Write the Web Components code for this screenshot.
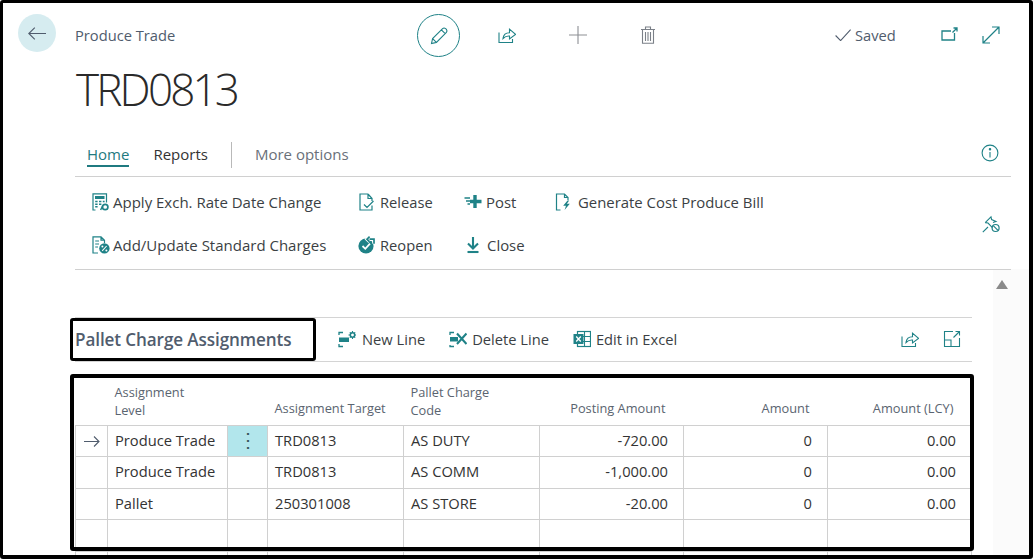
<!DOCTYPE html>
<html lang="en"><head><meta charset="utf-8"><title>Produce Trade</title>
<style>
html,body{margin:0;padding:0;background:#fff}
body{font-family:"Open Sans","Liberation Sans",sans-serif;width:1033px;height:559px;overflow:hidden}
</style></head><body>
<script>
const T='#1f8287';
const svg=(inner,w=18,h=18,vb='0 0 18 18')=>`<svg width="${w}" height="${h}" viewBox="${vb}" fill="none" stroke="currentColor" stroke-width="1.1" style="display:block">${inner}</svg>`;
const ICONS={
 back:svg('<path d="M.8 6.5H18M6.8.6L.8 6.5L6.8 12.4"/>',19,13,'0 0 19 13'),
 pencil:svg('<path d="M2.5 17.5L3.6 12.6L13.6 2.6Q15 1.4 16.6 2.6L17.4 3.4Q18.6 5 17.4 6.4L7.4 16.4ZM3.6 12.6L7.4 16.4M12.4 3.8L16.2 7.6"/>',20,20,'0 0 20 20'),
 share:svg('<path d="M1 6.5V16.5H14.5V13M5 12.5C5.5 8.5 8 6.8 11.5 6.8V3.2L17.5 8.4L11.5 13V10C8.8 9.8 6.8 10.6 5 12.5Z"/>'),
 plus:svg('<path d="M9 0V18M0 9H18"/>',18,18),
 trash:svg('<path d="M1 3.5H15M5.5 3.5V1H10.5V3.5M2.5 3.5V17.2H13.5V3.5M5.5 6V15M8 6V15M10.5 6V15"/>',16,18,'0 0 16 18'),
 check:svg('<path d="M.6 6.5L5.6 11.6L15.6.6"/>',16,12,'0 0 16 12'),
 popout:svg('<path d="M13.5 6V13H1V4H10M11.5 5.5L16 1M12.5 1H16V4.5" stroke-width="1.3"/>',17,14,'0 0 17 14'),
 expand:svg('<path d="M1 17L17 1M10 1H17V8M1 10V17H8" stroke-width="1.2"/>'),
 info:svg('<circle cx="9" cy="9" r="7.9"/><path d="M9 8V13.4"/><circle cx="9" cy="5.3" r=".7" fill="currentColor"/>'),
 pin:svg('<path d="M.8 17.2L6 12M3.2 7.6L9 1.8L9.6 4.6L14 6.4L11 7.6M3.2 7.6L6 8L10.4 12.6"/><circle cx="13.6" cy="13" r="3.5" stroke-width="1.2"/><path d="M11.2 10.6L16 15.4" stroke-width="1.2"/>'),
 calc:svg('<path d="M3.5 17H1V.8H14.5V9.5" stroke-width="1.2"/><rect x="3" y="3" width="9.5" height="3" fill="currentColor" stroke="none"/><path d="M3.2 8.6H5.6M7 8.6H9.4M10.8 8.6H12.6M3.2 11.2H5.6M7 11.2H9.4M3.2 13.8H5.6" stroke-width="1.5"/><circle cx="13.2" cy="14" r="2.7" stroke-width="1.7"/><path d="M8.6 17L10.6 13" stroke-width="1.5"/>'),
 doccheck:svg('<path d="M10 1H2V17H14V12.5M10 1V5.5H14V8M10 1L14 5.5M6 11.5L9 14.5L15.5 8" stroke-width="1.2"/>'),
 docpct:svg('<path d="M6 17H1V.8H9L12.5 4.2V7M9 .8V4.2H12.5M3.2 5H7M3.2 8H7M3.2 11H6" stroke-width="1.2"/><circle cx="12.4" cy="12.4" r="5.2" fill="currentColor" stroke="none"/><path d="M10.2 14.8L14.6 10" stroke="#fff"/><circle cx="10.4" cy="10.4" r="1" fill="#fff" stroke="none"/><circle cx="14.4" cy="14.4" r="1" fill="#fff" stroke="none"/>'),
 reopen:svg('<circle cx="8" cy="10" r="7.6" fill="currentColor" stroke="none"/><path d="M4.5 10L7.3 12.8L12 7.6" stroke="#fff" stroke-width="1.8"/><path d="M11.5 3.2H16V7.8M11.6 .6L9 3.2L11.6 5.8" stroke="#fff" stroke-width="3.4"/><path d="M11.5 3.2H16V7.8M11.6 .6L9 3.2L11.6 5.8" stroke-width="1.7"/>'),
 post:svg('<path d="M.5 5H6M2 8H6M3.5 11H6" stroke-width="1.4"/><path d="M11 2V15M6 8.5H17.5" stroke-width="3.4"/>'),
 close:svg('<path d="M9 1V12M4 7.5L9 12.5L14 7.5" stroke-width="2.1"/><path d="M3.5 16H14.5" stroke-width="2.1"/>'),
 gen:svg('<path d="M5.5 17H1.5V1H9.5L13 4.5V7M9.5 1V4.5H13" stroke-width="1.2"/><path d="M12.5 7.5L8.2 12.8H11L9.6 17L14.8 10.8H11.8L14.2 7.5Z" fill="currentColor" stroke="none"/>'),
 newline:svg('<path d="M1 5V2.5H5M1 14V16.5H5" stroke-width="1.3"/><rect x="1" y="7.5" width="10" height="4.5" fill="currentColor" stroke="none"/><circle cx="14.5" cy="5" r="2.2" stroke-width="1.5"/><path d="M14.5 1V3M14.5 7V9M10.5 5H12.5M16.5 5H18M11.8 2.3L13 3.5M17.2 2.3L16 3.5M11.8 7.7L13 6.5M17.2 7.7L16 6.5"/>'),
 delline:svg('<path d="M1 5V2.5H5M1 15V16.5H5" stroke-width="1.3"/><rect x="1" y="7" width="8" height="4.5" fill="currentColor" stroke="none"/><path d="M8 3.5L17.5 14M17.5 3.5L8 14" stroke-width="2.1"/>'),
 excel:svg('<rect x="4.5" y="1.5" width="13" height="15" stroke-width="1.2"/><path d="M4.5 6.5H17.5M4.5 11.5H17.5M11.5 1.5V16.5"/><rect x=".5" y="4" width="10" height="10" fill="currentColor" stroke="none"/><path d="M3.2 6.5L7.8 11.5M7.8 6.5L3.2 11.5" stroke="#fff" stroke-width="1.3"/>'),
 frame:svg('<path d="M10 1.5H1.5V16.5H16.5V8M1.5 10H8V16.5M10.5 7.5L16.5 1.5M12.5 1.5H16.5V5.5"/>'),
 arrow:svg('<path d="M0 6.5H15M10 1.5L15 6.5L10 11.5"/>',16,13,'0 0 16 13'),
};
class UiIcon extends HTMLElement{
 connectedCallback(){
  if(this.shadowRoot)return;
  const s=this.attachShadow({mode:'open'});
  s.innerHTML=`<style>:host{display:inline-flex;align-items:center;justify-content:center;color:var(--icon,${T});flex:none}</style>${ICONS[this.getAttribute('name')]||''}`;
 }
}
customElements.define('ui-icon',UiIcon);

class AppFrame extends HTMLElement{
 constructor(){super();this.attachShadow({mode:'open'}).innerHTML=`<style>
 :host{display:block;box-sizing:border-box;width:1033px;height:559px;border:solid #000;border-width:3px 4px 4px 3px;background:#fff;overflow:hidden;position:relative;border-radius:3px}
 .track{position:absolute;right:0;top:266px;bottom:0;width:36px;background:#fbfbfb}
 .thumb{position:absolute;left:3px;top:11px;width:0;height:0;border:solid transparent;border-width:0 6px 9px;border-bottom-color:#8a8a8a}
 .body{position:relative}
 </style><div class="track"><div class="thumb"></div></div><div class="body"><slot></slot></div>`}
}
customElements.define('app-frame',AppFrame);

class PageHeader extends HTMLElement{
 constructor(){super();this.attachShadow({mode:'open'}).innerHTML=`<style>
 :host{display:block;padding:11px 0 0 15px;height:124px;box-sizing:border-box}
 .top{display:flex;align-items:flex-start}
 .back{width:38px;height:38px;border-radius:50%;background:#d6ecf0;display:flex;align-items:center;justify-content:center;--icon:#505c6d;flex:none}
 .cap{margin:11px 0 0 19px;width:342px;font-size:14.7px;line-height:20px;color:#505c6d}
 .edit{width:41px;height:41px;border:1.2px solid ${T};border-radius:50%;display:flex;align-items:center;justify-content:center;flex:none}
 .ic{display:flex;align-items:center;margin-top:12px}
 .saved{display:flex;align-items:center;gap:4px;margin:11px 0 0 0;font-size:14.7px;line-height:20px;color:#505c6d;--icon:#505c6d;width:98px}
 h1{margin:2px 0 0 58px;font-weight:300;font-size:44px;line-height:60px;letter-spacing:-2.8px;color:#2a2a2a}
 </style>
 <div class="top">
  <div class="back"><ui-icon name="back"></ui-icon></div>
  <div class="cap"><slot name="caption"></slot></div>
  <div class="edit"><ui-icon name="pencil"></ui-icon></div>
  <div class="ic" style="margin-left:38px"><ui-icon name="share"></ui-icon></div>
  <div class="ic" style="margin-left:53px;--icon:#8d8f94"><ui-icon name="plus"></ui-icon></div>
  <div class="ic" style="margin-left:53px;--icon:#7b8088"><ui-icon name="trash"></ui-icon></div>
  <div style="width:179px"></div>
  <div class="saved"><ui-icon name="check"></ui-icon><span>Saved</span></div>
  <div class="ic" style="margin-left:8px;margin-top:13px"><ui-icon name="popout"></ui-icon></div>
  <div class="ic" style="margin-left:24px"><ui-icon name="expand"></ui-icon></div>
 </div>
 <h1><slot name="title"></slot></h1>`}
}
customElements.define('page-header',PageHeader);

class ActionTabs extends HTMLElement{
 constructor(){super();this.attachShadow({mode:'open'}).innerHTML=`<style>
 :host{display:flex;align-items:center;height:50px;margin-left:72px;width:936px;box-sizing:border-box;border-bottom:1px solid #d0d0d0;font-size:15px;padding:7px 0 0 12px;position:relative}
 .on{color:#1f7a80;border-bottom:2px solid #1f7a80;line-height:19px;padding-bottom:1.5px;margin-top:1.5px}
 .r{margin:-2px 0 0 24px;color:#333}
 .sep{width:1px;height:26px;background:#b9b9b9;margin:0 23px 0 23px}
 .m{color:#6a7079;margin-top:-2px}
 .i{margin-left:auto;margin-right:12px}
 </style><span class="on">Home</span><span class="r">Reports</span><span class="sep"></span><span class="m">More options</span><span class="i"><ui-icon name="info"></ui-icon></span>`}
}
customElements.define('action-tabs',ActionTabs);

class ActionItem extends HTMLElement{
 constructor(){super();this.attachShadow({mode:'open'}).innerHTML=`<style>
 :host{display:inline-flex;align-items:center;gap:var(--g,5px);font-size:var(--fs,14.9px);color:#3b3f44;white-space:nowrap}
 </style><slot name="i"></slot><slot></slot>`}
 connectedCallback(){ if(this.querySelector('ui-icon'))return;
  const i=document.createElement('ui-icon');i.setAttribute('name',this.getAttribute('icon'));i.slot='i';this.prepend(i);}
}
customElements.define('action-item',ActionItem);

class ActionBar extends HTMLElement{
 constructor(){super();this.attachShadow({mode:'open'}).innerHTML=`<style>
 :host{display:grid;grid-template-columns:266px 106px 91px 1fr;grid-auto-rows:43px;align-items:center;margin-left:72px;width:936px;box-sizing:border-box;padding:3px 0 0 17px;height:93px;border-bottom:1px solid #d0d0d0;position:relative}
 .pin{position:absolute;right:11px;top:38px}
 </style><slot></slot><span class="pin"><ui-icon name="pin"></ui-icon></span>`}
}
customElements.define('action-bar',ActionBar);

class CalloutBox extends HTMLElement{
 constructor(){super();this.attachShadow({mode:'open'}).innerHTML=`<style>
 :host{display:block;position:absolute;box-sizing:border-box;border:3px solid #000;border-radius:3px;pointer-events:none;z-index:2}
 </style>`}
}
customElements.define('callout-box',CalloutBox);

class PartBar extends HTMLElement{
 constructor(){super();this.attachShadow({mode:'open'}).innerHTML=`<style>
 :host{display:flex;align-items:center;height:45px;box-sizing:border-box;border:solid #d4d4d4;border-width:1px 0;color:#3b3f44;position:relative;--fs:14.7px}
 .t{font-weight:600;font-size:17.1px;color:#505c6d;width:263px;white-space:nowrap;letter-spacing:-.1px;margin-top:-1px}
 .g{display:flex;gap:24px;margin-top:-2px}
 .r{margin-left:auto;display:flex;gap:24px;margin-right:11px;margin-top:-2px}
 callout-box{left:-5px;top:0;width:246px;height:43px}
 </style><span class="t"><slot name="title"></slot></span><div class="g"><slot></slot></div>
 <div class="r"><ui-icon name="share"></ui-icon><ui-icon name="frame"></ui-icon></div>
 <callout-box></callout-box>`}
}
customElements.define('part-bar',PartBar);

class DataGrid extends HTMLElement{
 constructor(){super();
 const cols=[32,120,40,136,136,144,144,144];
 const hdr=['', 'Assignment<br>Level','', 'Assignment Target','Pallet Charge<br>Code','Posting Amount','Amount','Amount (LCY)'];
 const rows=[['Produce Trade','TRD0813','AS DUTY','-720.00','0','0.00'],['Produce Trade','TRD0813','AS COMM','-1,000.00','0','0.00'],['Pallet','250301008','AS STORE','-20.00','0','0.00'],['','','','','',''],['','','','','','']];
 const hs=[31,32,31,32,32];
 const cg=cols.map(w=>`<col style="width:${w}px">`).join('');
 const h=hdr.map((t,i)=>`<th class="${i>4?'n':''} ${t.includes('<br>')?'two':''}">${t}</th>`).join('');
 const b=rows.map((r,ri)=>`<tr style="height:${hs[ri]}px"><td class="a">${ri==0?'<ui-icon name="arrow"></ui-icon>':''}</td><td>${r[0]}</td><td class="${ri==0?'m':''}">${ri==0?'⋮':''}</td><td>${r[1]}</td><td>${r[2]}</td><td class="n">${r[3]}</td><td class="n">${r[4]}</td><td class="n">${r[5]}</td></tr>`).join('');
 this.attachShadow({mode:'open'}).innerHTML=`<style>
 :host{display:block;position:relative;font-size:14.7px}
 table{border-collapse:collapse;table-layout:fixed;width:896px}
 thead tr{height:63px}
 th{font-weight:400;font-size:12.8px;color:#5a6470;text-align:left;vertical-align:bottom;padding:0 7px 8px;line-height:18px;border-bottom:1px solid #d0d0d0;box-sizing:border-box}
 th.two{padding-bottom:6px}
 th.n{text-align:right;padding-right:18px}
 td{padding:0 7px 2px;border:1px solid #d0d0d0;color:#333;white-space:nowrap;box-sizing:border-box;height:inherit}
 td.n{text-align:right;padding-right:15px}
 td.a{text-align:center;padding:0 0 2px;--icon:#505c6d}
 td.a ui-icon{vertical-align:middle}
 td.m{background:#b2e6ec;text-align:center;padding:0 0 2px;font-size:20px;line-height:20px;color:#3a5a60;font-weight:400}
 callout-box{left:-5px;top:12px;width:904px;height:177px;border-width:4px}
 </style><table><colgroup>${cg}</colgroup><thead><tr>${h}</tr></thead><tbody>${b}</tbody></table><callout-box></callout-box>`}
}
customElements.define('data-grid',DataGrid);

class PageSection extends HTMLElement{
 constructor(){super();this.attachShadow({mode:'open'}).innerHTML=`<style>
 :host{display:block;margin:47px 0 0 72px;width:897px}
 </style><slot></slot>`}
}
customElements.define('page-section',PageSection);
</script>
<app-frame>
 <page-header><span slot="caption">Produce Trade</span><span slot="title">TRD0813</span></page-header>
 <action-tabs></action-tabs>
 <action-bar>
  <action-item icon="calc" style="--g:3px;--fs:15px">Apply Exch. Rate Date Change</action-item>
  <action-item icon="doccheck" style="--g:4px;--fs:14.7px">Release</action-item>
  <action-item icon="post" style="--g:4px">Post</action-item>
  <action-item icon="gen">Generate Cost Produce Bill</action-item>
  <action-item icon="docpct" style="--g:3px;--fs:15px">Add/Update Standard Charges</action-item>
  <action-item icon="reopen" style="--g:4px;--fs:14.7px">Reopen</action-item>
  <action-item icon="close" style="--g:5px">Close</action-item>
 </action-bar>
 <page-section>
  <part-bar><span slot="title">Pallet Charge Assignments</span>
   <action-item icon="newline" style="--g:6px">New Line</action-item>
   <action-item icon="delline" style="--g:5px">Delete Line</action-item>
   <action-item icon="excel" style="--g:5px">Edit in Excel</action-item>
  </part-bar>
  <data-grid></data-grid>
 </page-section>
</app-frame>
</body></html>
